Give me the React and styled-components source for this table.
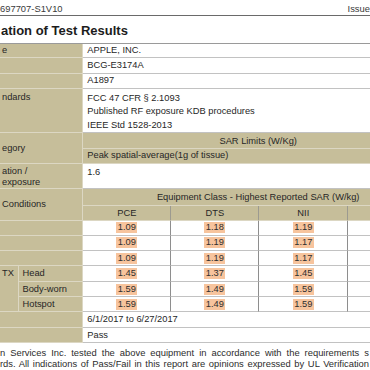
import React from 'react';
import styled, { createGlobalStyle } from 'styled-components';

const GlobalStyle = createGlobalStyle`
  html, body {
    margin: 0;
    padding: 0;
    background: #fff;
    overflow: hidden;
  }
  body {
    font-family: "Liberation Sans", Arial, sans-serif;
    color: #222;
  }
`;

const TAN = '#c6be9a';
const TAN_LINE = '#dcd7c3';
const GRID_LINE = '#c2c2c2';
const DIVIDER = '#8e8e8e';

const Page = styled.div`
    width: 370px;
    height: 370px;
    overflow: hidden;
`;

const Header = styled.div`
    display: flex;
    justify-content: space-between;
    height: 15px;
    line-height: 17px;
    font-size: 9.4px;
    color: #3a3a3a;
    border-bottom: 1px solid #6a6a6a;
`;

const Title = styled.h1`
    margin: 6.5px 0 5.8px 1px;
    font-size: 13px;
    line-height: 15px;
    font-weight: bold;
    color: #1c1c1c;
`;

const Table = styled.table`
    width: 434px;
    table-layout: fixed;
    border-collapse: separate;
    border-spacing: 0;
    border-top: 1px solid #9a9a9a;
    font-size: 9.3px;
    color: #262626;
`;

const Col = styled.col`
    width: ${p => p.$w}px;
`;

const Row = styled.tr`
    height: ${p => p.$h}px;
`;

const Label = styled.td`
    padding: ${p => (p.$top ? '2px' : '0')} 0 0 ${p => (p.$sub ? 4 : 2)}px;
    background: ${TAN};
    border-bottom: 1px solid ${TAN_LINE};
    border-right: 1px solid ${TAN_LINE};
    vertical-align: ${p => (p.$top ? 'top' : 'middle')};
    line-height: ${p => p.$lh || 13}px;
    white-space: nowrap;
    overflow: hidden;
`;

const Value = styled.td`
    padding: ${p => (p.$top ? '3px' : '0')} 0 0 4px;
    background: ${p => (p.$tan ? TAN : '#fff')};
    border-bottom: 1px solid ${p => (p.$tan ? TAN_LINE : GRID_LINE)};
    vertical-align: ${p => (p.$top ? 'top' : 'middle')};
    line-height: ${p => p.$lh || 13}px;
    white-space: nowrap;
    overflow: hidden;
`;

const Heading = styled.td`
    padding: 0;
    text-align: center;
    background: ${TAN};
    border-bottom: 1px solid ${TAN_LINE};
    border-right: 1px solid ${p => (p.$div ? '#9c9a90' : TAN)};
    vertical-align: middle;
    white-space: nowrap;
    overflow: hidden;
`;

const Num = styled.td`
    padding: 0;
    text-align: center;
    background: #fff;
    border-bottom: 1px solid ${GRID_LINE};
    border-right: 1px solid ${DIVIDER};
    vertical-align: middle;
`;

const Mark = styled.span`
    display: inline-block;
    padding: 0 1.5px;
    line-height: 11px;
    background: #f7c49d;
    color: #2e2e2e;
`;

const Footer = styled.div`
    margin-top: 4px;
    width: 369px;
    font-size: 9.4px;
    line-height: 11px;
    color: #2c2c2c;
`;

const FootLine = styled.div`
    white-space: nowrap;
    text-align: justify;
    text-align-last: justify;
`;

const sar = [
    {label: '', values: ['1.09', '1.18', '1.19']},
    {label: '', values: ['1.09', '1.19', '1.17']},
    {label: '', values: ['1.09', '1.19', '1.17']},
];

const tx = [
    {label: 'Head', values: ['1.45', '1.37', '1.45'], h: 15.5},
    {label: 'Body-worn', values: ['1.59', '1.49', '1.59'], h: 15.5},
    {label: 'Hotspot', values: ['1.59', '1.49', '1.59'], h: 15},
];

const NumCells = ({values}) => (
    <>
        {values.map((v, i) => (
            <Num key={`n-${i}`}><Mark>{v}</Mark></Num>
        ))}
        <Num />
    </>
);

const App = () => (
    <Page>
        <GlobalStyle />
        <Header>
            <span>697707-S1V10</span>
            <span>Issue</span>
        </Header>
        <Title>ation of Test Results</Title>
        <Table>
            <colgroup>
                <Col $w={18.5} />
                <Col $w={64.8} />
                <Col $w={88} />
                <Col $w={88} />
                <Col $w={89} />
                <Col $w={85.7} />
            </colgroup>
            <tbody>
                <Row $h={14.2}>
                    <Label colSpan={2}>e</Label>
                    <Value colSpan={4}>APPLE, INC.</Value>
                </Row>
                <Row $h={15.3}>
                    <Label colSpan={2} />
                    <Value colSpan={4}>BCG-E3174A</Value>
                </Row>
                <Row $h={15.2}>
                    <Label colSpan={2} />
                    <Value colSpan={4}>A1897</Value>
                </Row>
                <Row $h={43.5}>
                    <Label colSpan={2} $top $lh={13.5}>ndards</Label>
                    <Value colSpan={4} $top $lh={13.5}>
                        FCC 47 CFR § 2.1093<br />
                        Published RF exposure KDB procedures<br />
                        IEEE Std 1528-2013
                    </Value>
                </Row>
                <Row $h={15.2}>
                    <Label colSpan={2} rowSpan={2}>egory</Label>
                    <Heading colSpan={4}>SAR Limits (W/Kg)</Heading>
                </Row>
                <Row $h={15.1}>
                    <Value colSpan={4} $tan>Peak spatial-average(1g of tissue)</Value>
                </Row>
                <Row $h={25.7}>
                    <Label colSpan={2} $top $lh={11}>ation /<br />exposure</Label>
                    <Value colSpan={4} $top $lh={11}>1.6</Value>
                </Row>
                <Row $h={16.5}>
                    <Label colSpan={2} rowSpan={2}>Conditions</Label>
                    <Heading colSpan={4}>Equipment Class - Highest Reported SAR (W/kg)</Heading>
                </Row>
                <Row $h={15}>
                    <Heading $div>PCE</Heading>
                    <Heading $div>DTS</Heading>
                    <Heading $div>NII</Heading>
                    <Heading $div />
                </Row>
                {sar.map((r, i) => (
                    <Row $h={i === 2 ? 15.5 : 15} key={`sar-${i}`}>
                        <Label colSpan={2}>{r.label}</Label>
                        <NumCells values={r.values} />
                    </Row>
                ))}
                {tx.map((r, i) => (
                    <Row $h={r.h} key={`tx-${i}`}>
                        {i === 0 && <Label rowSpan={3} $top $lh={11.5}>TX</Label>}
                        <Label $sub>{r.label}</Label>
                        <NumCells values={r.values} />
                    </Row>
                ))}
                <Row $h={15.5}>
                    <Label colSpan={2} />
                    <Value colSpan={4}>6/1/2017 to 6/27/2017</Value>
                </Row>
                <Row $h={15.5}>
                    <Label colSpan={2} />
                    <Value colSpan={4}>Pass</Value>
                </Row>
            </tbody>
        </Table>
        <Footer>
            <FootLine>n Services Inc. tested the above equipment in accordance with the requirements s</FootLine>
            <FootLine>rds. All indications of Pass/Fail in this report are opinions expressed by UL Verification</FootLine>
        </Footer>
    </Page>
);

export default App;
